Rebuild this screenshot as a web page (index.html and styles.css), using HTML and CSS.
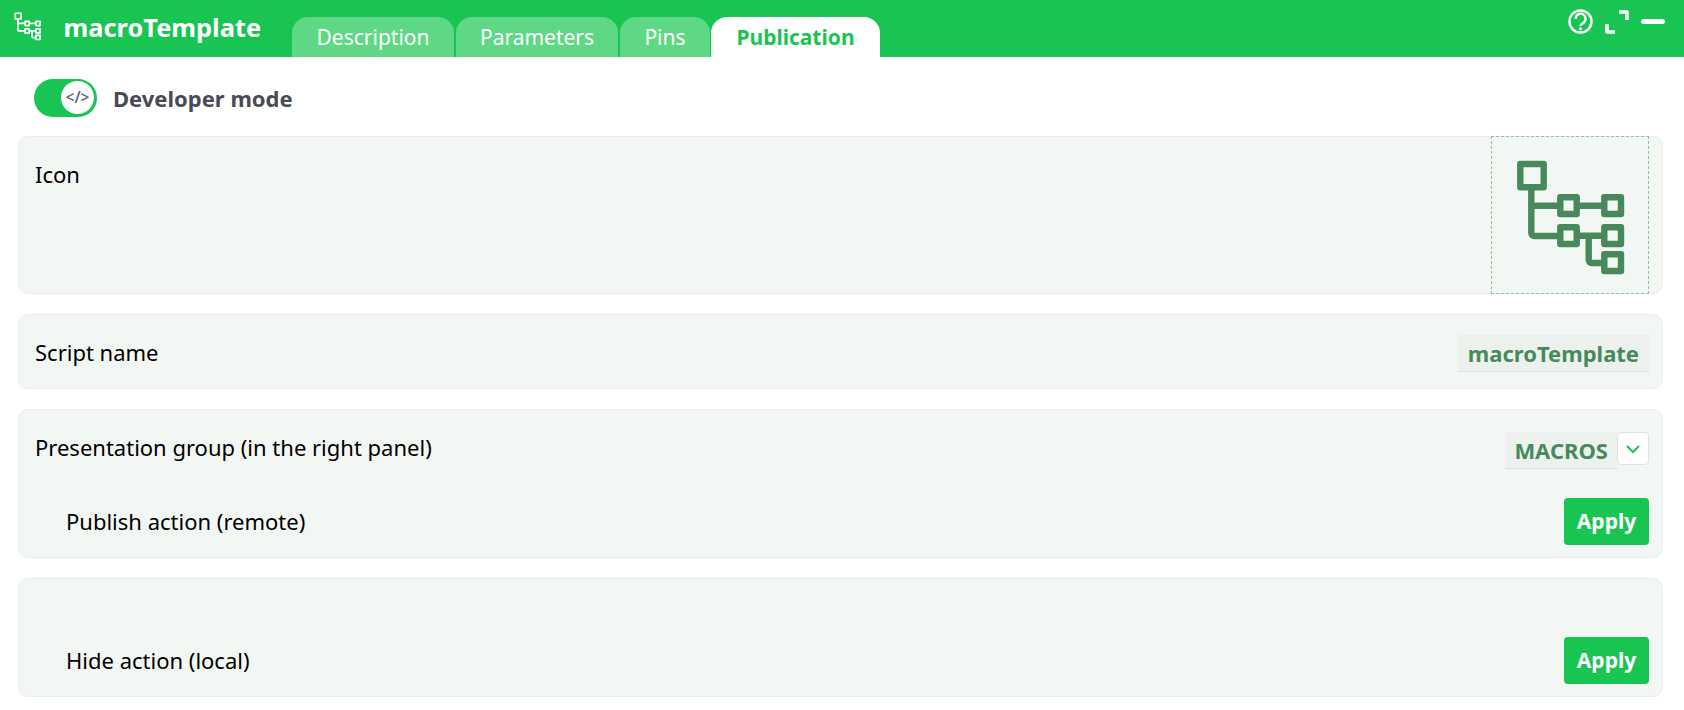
FILE: index.html
```html
<!DOCTYPE html>
<html lang="en">
<head>
<meta charset="utf-8">
<title>macroTemplate</title>
<link rel="stylesheet" href="styles.css">
</head>
<body>
<svg class="defs" width="0" height="0" aria-hidden="true">
  <symbol id="tree" viewBox="0 0 112 118">
    <g fill="none" stroke="currentColor" stroke-linejoin="round" stroke-linecap="round">
      <rect x="5.3" y="5" width="23.4" height="23.3"/>
      <rect x="45.3" y="38.3" width="16.4" height="16.7"/>
      <rect x="89.3" y="38.3" width="16.7" height="16.7"/>
      <rect x="45.3" y="68.3" width="16.4" height="16.7"/>
      <rect x="89.3" y="68.3" width="16.7" height="16.7"/>
      <rect x="89.3" y="95.3" width="16.7" height="16.7"/>
      <path d="M16.3 31V74a3 3 0 0 0 3 3H45M16.3 46.7H45M65 46.7H89M65 76.7H89M73.7 76.7V101a3 3 0 0 0 3 3H89"/>
    </g>
  </symbol>
</svg>
<header class="topbar">
  <svg class="logo"><use href="#tree"/></svg>
  <h1 class="title">macroTemplate</h1>
  <nav class="tabs">
    <span class="tab tab-description">Description</span>
    <span class="tab tab-parameters">Parameters</span>
    <span class="tab tab-pins">Pins</span>
    <span class="tab tab-active">Publication</span>
  </nav>
  <div class="window-actions">
    <svg class="help" viewBox="0 0 25 25">
      <circle cx="12.5" cy="12.5" r="11" fill="none" stroke="#fff" stroke-width="2.4"/>
      <path d="M7.6 9.8a5 5 0 1 1 8 3.9c-1.6 1.2-3.1 1.6-3.1 3.2" fill="none" stroke="#fff" stroke-width="2.4"/>
      <circle cx="12.5" cy="19.8" r="1.5" fill="#fff"/>
    </svg>
    <svg class="expand" viewBox="0 0 24 24">
      <path d="M14 2H22V10M2 14V22H10" fill="none" stroke="#fff" stroke-width="3.6" stroke-linejoin="round"/>
    </svg>
    <span class="minimise"></span>
  </div>
</header>
<main class="content">
  <div class="dev-row">
    <span class="toggle">
      <span class="knob">&lt;/&gt;</span>
    </span>
    <span class="dev-label">Developer mode</span>
  </div>
  <section class="card card-icon">
    <span class="label label-icon">Icon</span>
    <div class="icon-box"><svg class="big-icon"><use href="#tree"/></svg></div>
  </section>
  <section class="card card-script">
    <span class="label">Script name</span>
    <span class="field">macroTemplate</span>
  </section>
  <section class="card card-stack">
    <div class="row row-group">
      <span class="label">Presentation group (in the right panel)</span>
      <div class="select">
        <span class="field field-select">MACROS</span>
        <span class="drop">
          <svg viewBox="0 0 16 10" width="16" height="10"><path d="M2 2l6 6 6-6" fill="none" stroke="#19c552" stroke-width="2"/></svg>
        </span>
      </div>
    </div>
    <div class="row row-action">
      <span class="label indent">Publish action (remote)</span>
      <button class="apply" type="button">Apply</button>
    </div>
  </section>
  <section class="card card-stack card-hide">
    <div class="row row-action">
      <span class="label indent">Hide action (local)</span>
      <button class="apply" type="button">Apply</button>
    </div>
  </section>
</main>
</body>
</html>
```
FILE: styles.css
```css
* { box-sizing: border-box; }
html, body { margin: 0; padding: 0; }
body {
  width: 1684px;
  height: 710px;
  overflow: hidden;
  background: #fff;
  color: #000;
  font-family: "Noto Sans", "Open Sans", sans-serif;
}
.defs { display: block; width: 0; height: 0; }
.topbar {
  height: 57px;
  background: #19c552;
  display: flex;
  align-items: flex-start;
  color: #fff;
  padding-left: 14px;
}
.logo {
  width: 27.5px;
  height: 29px;
  margin-top: 12px;
  stroke-width: 7;
  color: #fff;
  flex: none;
}
.title {
  margin: 7px 0 0 22px;
  font-size: 25.4px;
  line-height: 40px;
  font-weight: 700;
  width: 228.5px;
  flex: none;
}
.tabs {
  display: flex;
  height: 40px;
  margin-top: 17px;
  gap: 2px;
}
.tab {
  height: 40px;
  border-radius: 16px 16px 0 0;
  background: #5fd885;
  color: #fff;
  font-size: 21px;
  line-height: 41px;
  text-align: center;
}
.tab-description { width: 162px; }
.tab-parameters { width: 162px; }
.tab-pins { width: 90px; }
.tab-active {
  width: 169px;
  margin-left: -1px;
  background: #fff;
  color: #19c552;
  font-weight: 700;
}
.window-actions {
  margin-left: auto;
  display: flex;
  align-items: center;
  padding-top: 9px;
  padding-right: 19px;
}
.help { width: 25px; height: 25px; }
.expand { width: 24px; height: 24px; margin-left: 12px; margin-top: 1px; }
.minimise {
  width: 24px;
  height: 5px;
  border-radius: 3px;
  background: #fff;
  margin-left: 12px;
}
.content { padding: 0 21px 0 18px; }
.dev-row {
  height: 79px;
  display: flex;
  align-items: center;
  padding: 2px 0 0 16px;
}
.toggle {
  width: 63px;
  height: 38px;
  border-radius: 19px;
  background: #19c552;
  display: flex;
  align-items: center;
  justify-content: flex-end;
  padding-right: 3px;
}
.knob {
  width: 33px;
  height: 33px;
  border-radius: 50%;
  background: #fff;
  color: #6a6a72;
  font-size: 15.5px;
  line-height: 33px;
  text-align: center;
  font-weight: 600;
}
.dev-label {
  margin-left: 16px;
  font-size: 22px;
  font-weight: 700;
  color: #4a4a55;
  line-height: 38px;
}
.card {
  background: #f3f7f4;
  border: 1px solid #e9edeb;
  border-radius: 10px;
  display: flex;
  justify-content: space-between;
  padding-left: 16px;
  padding-right: 13px;
}
.label { font-size: 22px; line-height: 30px; }
.card-icon {
  height: 158px;
  margin-bottom: 20px;
  align-items: flex-start;
}
.label-icon { margin-top: 22px; }
.icon-box {
  width: 158px;
  height: 158px;
  margin-top: -1px;
  border: 1px dashed #8cc4a0;
  display: flex;
  padding: 22px 0 0 23px;
}
.big-icon {
  width: 112px;
  height: 118px;
  stroke-width: 6.4;
  color: #48895c;
}
.card-script {
  height: 75px;
  margin-bottom: 20px;
  align-items: center;
}
.card-script .field { margin-top: 3px; }
.field {
  background: #ecf1ee;
  border-bottom: 1px solid #dbe5e0;
  color: #468a5c;
  font-size: 22px;
  font-weight: 700;
  height: 37px;
  line-height: 36px;
  padding: 0 10px;
}
.field-select { padding: 0 9px; }
.card-stack {
  flex-direction: column;
  justify-content: flex-start;
  height: 149px;
  margin-bottom: 20px;
}
.card-hide { height: 119px; justify-content: flex-end; margin-bottom: 0; padding-bottom: 12px; }
.row {
  display: flex;
  justify-content: space-between;
}
.row-group { align-items: flex-start; padding-top: 22px; height: 88px; }
.row-group .label { margin-top: 0; }
.row-action { align-items: center; height: 47px; }
.row-action .label { margin-top: -2px; }
.indent { margin-left: 31px; }
.select { display: flex; align-items: flex-start; }
.drop {
  width: 32px;
  height: 33px;
  background: #fff;
  border: 1px solid #dbe5e0;
  border-radius: 4px;
  display: flex;
  align-items: center;
  justify-content: center;
}
.apply {
  width: 85px;
  height: 47px;
  border: 0;
  border-radius: 4px;
  background: #19c552;
  color: #fff;
  font: 700 21px "Noto Sans", sans-serif;
  padding: 0 0 1px;
}
```
